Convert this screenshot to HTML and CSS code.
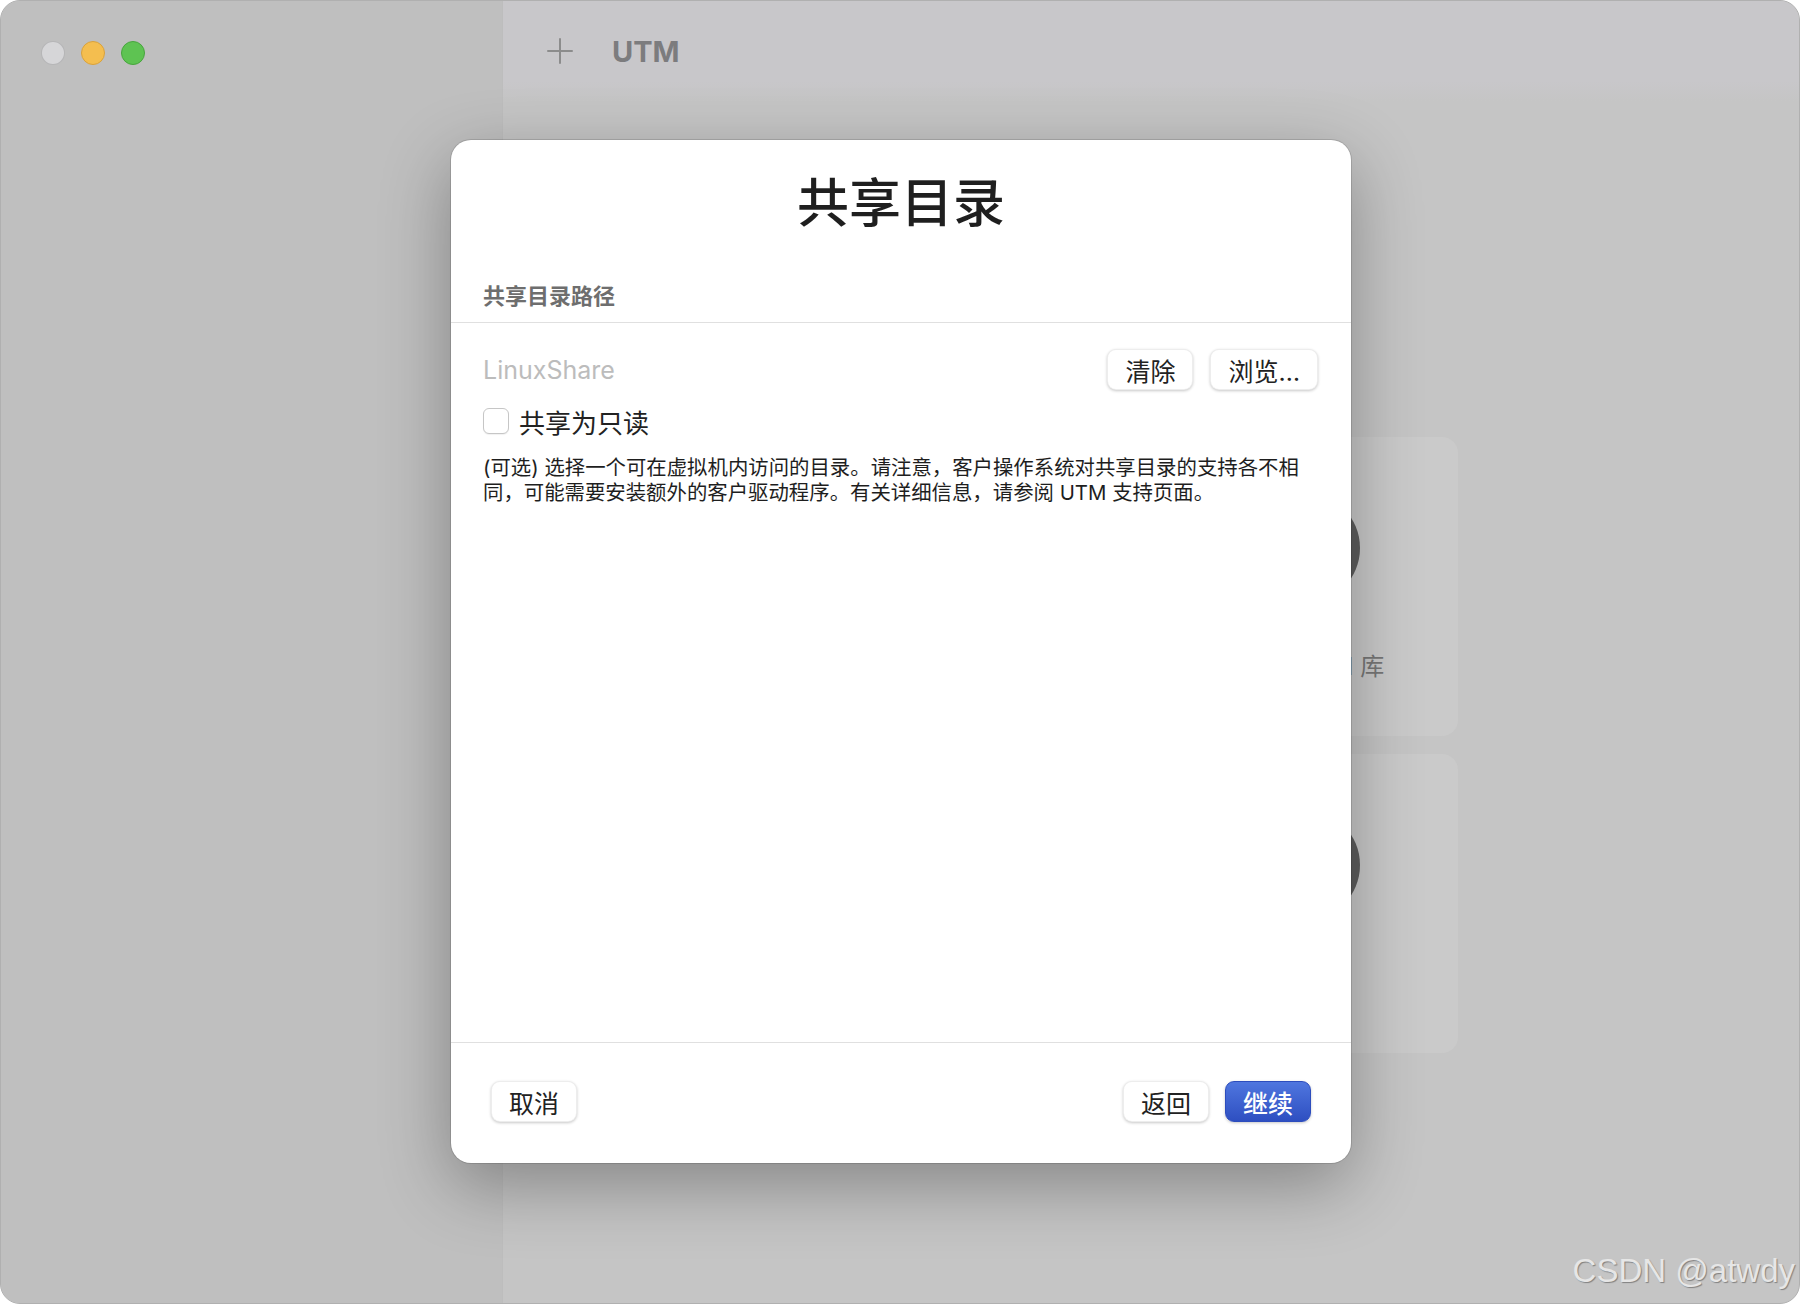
FILE: index.html
```html
<!DOCTYPE html>
<html lang="zh-CN">
<head>
<meta charset="UTF-8" />
<meta name="viewport" content="width=device-width, initial-scale=1" />
<title>UTM — 共享目录</title>
<link rel="stylesheet" href="styles.css">
</head>
<body>
  <div class="window">
    <aside class="sidebar">
      <div class="lights">
        <span class="light light-close"></span>
        <span class="light light-min"></span>
        <span class="light light-max"></span>
      </div>
    </aside>

    <main class="main">
      <header class="toolbar">
        <svg class="plus" viewBox="0 0 28 28" width="28" height="28" aria-hidden="true">
          <path d="M14 2v24M2 14h24" stroke="#8c8c8c" stroke-width="2" fill="none" stroke-linecap="round"/>
        </svg>
        <span class="app-title">UTM</span>
      </header>

      <section class="cards">
        <div class="card"><span class="card-icon"></span></div>
        <div class="card"><span class="card-icon"></span><span class="card-label">浏览 UTM 库</span></div>
        <div class="card"><span class="card-icon"></span></div>
        <div class="card"><span class="card-icon"></span></div>
      </section>
    </main>

    <!-- modal sheet -->
    <form class="sheet" novalidate>
      <div class="sheet-head">
        <h1>共享目录</h1>
        <div class="section-label">共享目录路径</div>
      </div>

      <div class="sheet-body">
        <div class="path-row">
          <span class="path">LinuxShare</span>
          <button type="button" class="btn">清除</button>
          <button type="button" class="btn">浏览…</button>
        </div>

        <label class="readonly">
          <input type="checkbox" class="check" />
          <span>共享为只读</span>
        </label>

        <p class="note">(可选) 选择一个可在虚拟机内访问的目录。请注意，客户操作系统对共享目录的支持各不相同，可能需要安装额外的客户驱动程序。有关详细信息，请参阅 UTM 支持页面。</p>
      </div>

      <div class="sheet-foot">
        <button type="button" class="btn">取消</button>
        <div class="foot-right">
          <button type="button" class="btn">返回</button>
          <button type="submit" class="btn btn-primary">继续</button>
        </div>
      </div>
    </form>

    <div class="watermark">CSDN @atwdy</div>
  </div>
</body>
</html>
```

FILE: styles.css
```css
:root {
  --sidebar-bg: #bfbfbf;
  --main-bg: #c5c5c5;
  --toolbar-bg: #c8c7ca;
  --card-bg: #cacaca;
  --text-color: #222;
  --line-color: #e0e0e0;
  --font-family: "Inter", "Noto Sans CJK SC", sans-serif;
}
* {
  box-sizing: border-box;
}
html, body {
  margin: 0;
  padding: 0;
  background: #fff;
}
body {
  width: 1800px;
  height: 1304px;
  overflow: hidden;
  font-family: var(--font-family);
  color: var(--text-color);
}
.window {
  position: relative;
  width: 1800px;
  height: 1304px;
  display: flex;
  border-radius: 20px;
  overflow: hidden;
  border: 1px solid #b0b0b0;
  background: var(--main-bg);
}

/* sidebar */
.sidebar {
  width: 502px;
  flex: none;
  background: var(--sidebar-bg);
  border-right: 1px solid #bdbdbd;
  padding: 40px 0 0 40px;
}
.lights {
  display: flex;
  gap: 16px;
}
.light {
  width: 24px;
  height: 24px;
  border-radius: 50%;
  border: 1px solid rgba(0, 0, 0, 0.15);
}
.light-close { background: #d6d6d8; }
.light-min { background: #f4be4f; border-color: #d9a23c; }
.light-max { background: #5ec352; border-color: #48a53e; }

/* main area */
.main {
  flex: 1;
  display: flex;
  flex-direction: column;
}
.toolbar {
  height: 100px;
  background: linear-gradient(#c8c7ca 80%, var(--main-bg));
  display: flex;
  align-items: center;
  padding-left: 43px;
  gap: 38px;
}
.app-title {
  font-family: "Inter", sans-serif;
  font-weight: 700;
  font-size: 29px;
  color: #7c7c7e;
}
.cards {
  flex: 1;
  display: grid;
  grid-template-columns: 308px 308px;
  grid-auto-rows: 299px;
  gap: 18px;
  justify-content: center;
  align-content: start;
  padding: 336px 20px 0 0;
}
.card {
  background: var(--card-bg);
  border-radius: 16px;
  display: flex;
  flex-direction: column;
  align-items: center;
  padding-top: 55px;
}
.card-icon {
  width: 112px;
  height: 112px;
  border-radius: 50%;
  background: #5e5e5e;
}
.card-label {
  margin: 43px 0 0 20px;
  font-size: 24px;
  color: #777;
}

/* sheet */
.sheet {
  position: absolute;
  left: 450px;
  top: 139px;
  width: 900px;
  height: 1023px;
  background: #fff;
  border-radius: 20px;
  box-shadow: 0 0 0 1px rgba(0, 0, 0, 0.12), 0 22px 70px rgba(0, 0, 0, 0.32);
  display: flex;
  flex-direction: column;
  margin: 0;
}
.sheet-head {
  padding: 32px 32px 12px;
  border-bottom: 1px solid var(--line-color);
}
.sheet-head h1 {
  margin: 0;
  font-size: 52px;
  line-height: 64px;
  font-weight: 500;
  text-align: center;
  color: #1f1f1f;
}
.section-label {
  margin-top: 46px;
  font-size: 22px;
  line-height: 28px;
  font-weight: 700;
  color: #6e6e6e;
}
.sheet-body {
  flex: 1;
  padding: 26px 33px 0 32px;
}
.path-row {
  display: flex;
  align-items: center;
  gap: 17px;
  height: 41px;
}
.path {
  flex: 1;
  font-size: 25px;
  color: #bcbcbc;
}
.btn {
  height: 41px;
  padding: 0 17px;
  font-family: var(--font-family);
  font-size: 25px;
  color: var(--text-color);
  background: #fff;
  border: 1px solid rgba(0, 0, 0, 0.07);
  border-radius: 9px;
  box-shadow: 0 1px 3px rgba(0, 0, 0, 0.22);
  cursor: pointer;
}
.btn-primary {
  color: #fff;
  font-weight: 500;
  background: linear-gradient(#4f76df, #2e4fc1);
  border-color: #2d4dbd;
}
.readonly {
  margin-top: 17px;
  display: flex;
  align-items: center;
  gap: 10px;
  height: 28px;
  font-size: 26px;
}
.check {
  appearance: none;
  margin: 0;
  width: 26px;
  height: 26px;
  border: 1px solid #c6c6c6;
  border-radius: 6px;
  background: #fff;
  box-shadow: 0 1px 1px rgba(0, 0, 0, 0.06);
}
.note {
  margin: 20px 0 0;
  font-size: 20.4px;
  line-height: 25px;
  color: #1e1e1e;
}
.sheet-foot {
  border-top: 1px solid var(--line-color);
  padding: 38px 40px 41px;
  display: flex;
  justify-content: space-between;
}
.foot-right {
  display: flex;
  gap: 16px;
}

/* csdn watermark */
.watermark {
  position: absolute;
  right: 4px;
  bottom: 13px;
  font-family: "Liberation Sans", sans-serif;
  font-size: 33px;
  color: #e6e6e6;
  text-shadow: 1px 1px 1px rgba(0, 0, 0, 0.35);
}
```
